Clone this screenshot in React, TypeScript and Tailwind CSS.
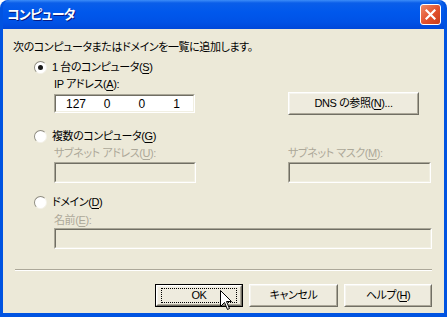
import React from 'react';

const font = "font-['Liberation_Sans','Noto_Sans_CJK_JP',sans-serif] [font-feature-settings:'palt']";

const Radio: React.FC<{ checked?: boolean; children: React.ReactNode }> = ({ checked, children }) => (
  <div className="flex h-[13px] items-center gap-[5px] pl-[31px]">
    <span className="flex h-[13px] w-[13px] items-center justify-center rounded-full border border-[#8e8c80] border-b-[#f4f2ea] border-r-[#f4f2ea] bg-white">
      {checked && <span className="h-[5px] w-[5px] rounded-full bg-[#1a1a1a]" />}
    </span>
    <span className="leading-[13px]">{children}</span>
  </div>
);

const SunkenBox: React.FC<{ className?: string; children?: React.ReactNode; enabled?: boolean }> = ({ className, children, enabled }) => (
  <div className={`border border-[#a9a697] border-b-white border-r-white ${className ?? ''}`}>
    <div className={`h-full border border-[#706e63] border-b-[#f1efe2] border-r-[#f1efe2] ${enabled ? 'bg-white' : 'bg-[#ece9d8]'}`}>
      {children}
    </div>
  </div>
);

const Button: React.FC<{ children: React.ReactNode; isDefault?: boolean; className?: string }> = ({ children, isDefault, className }) => {
  const bevel = (
    <div className="h-full border border-white border-b-[#716f64] border-r-[#716f64]">
      <div className="flex h-full items-center justify-center border border-[#f5f4ee] border-b-[#aca899] border-r-[#aca899] bg-[#eeebde]">
        {isDefault ? (
          <div className="flex h-[15px] w-[calc(100%-6px)] items-center justify-center border border-dotted border-black">{children}</div>
        ) : (
          children
        )}
      </div>
    </div>
  );
  return isDefault ? (
    <div className={`h-[23px] border border-black ${className ?? ''}`}>{bevel}</div>
  ) : (
    <div className={`h-[23px] ${className ?? ''}`}>{bevel}</div>
  );
};

const U: React.FC<{ children: React.ReactNode }> = ({ children }) => (
  <span className="underline underline-offset-[2px]">{children}</span>
);

export default function App() {
  return (
    <div className={`h-[317px] w-[447px] bg-white text-[11px] tracking-[-0.4px] text-black ${font}`}>
      <div className="flex h-full flex-col rounded-t-[8px] bg-[#0053e1] px-[3px] pb-[4px]">
        {/* title bar */}
        <div className="flex h-[29px] shrink-0 items-center justify-between rounded-t-[7px] bg-[linear-gradient(#3c8cf8_0px,#0a5ee9_3px,#0058ec_12px,#0052e6_22px,#0048d9_29px)] pl-[4px] pr-[3px]">
          <span className="text-[13px] font-bold leading-[13px] tracking-[-0.8px] text-white [text-shadow:1px_1px_0_#0a1a80]">コンピュータ</span>
          <div className="flex h-[21px] w-[21px] items-center justify-center rounded-[3px] border border-white bg-[linear-gradient(135deg,#f08a68,#e2502c_55%,#c83d1c)]">
            <svg width="11" height="11" viewBox="0 0 11 11">
              <path d="M1.5 1.5 L9.5 9.5 M9.5 1.5 L1.5 9.5" stroke="white" strokeWidth="2.2" strokeLinecap="square" />
            </svg>
          </div>
        </div>

        {/* client area */}
        <div className="flex flex-1 flex-col bg-[#ece9d8]">
          <div className="mt-[12px] h-[12px] pl-[10px] leading-[12px]">次のコンピュータまたはドメインを一覧に追加します。</div>

          <div className="mt-[8px]">
            <Radio checked>1 台のコンピュータ(<U>S</U>)</Radio>
          </div>

          <div className="mt-[4px] h-[12px] pl-[51px] leading-[12px]">IP アドレス(<U>A</U>):</div>

          <div className="mt-[2px] flex h-[23px] items-center pl-[51px]">
            <SunkenBox enabled className="h-[19px] w-[141px]">
              <div className="flex h-full items-center text-[12px] leading-[12px] tracking-normal">
                <span className="w-[36px] pl-[10px]">127</span>
                <span className="w-[36px] pl-[12px]">0</span>
                <span className="w-[36px] pl-[11px]">0</span>
                <span className="w-[30px] pl-[10px]">1</span>
              </div>
            </SunkenBox>
            <Button className="ml-[93px] w-[131px]">
              DNS の参照(<U>N</U>)...
            </Button>
          </div>

          <div className="mt-[15px]">
            <Radio>複数のコンピュータ(<U>G</U>)</Radio>
          </div>

          <div className="mt-[4px] flex h-[12px] pl-[51px] leading-[12px] text-[#aca899]">
            <span className="w-[234px]">サブネット アドレス(<U>U</U>):</span>
            <span>サブネット マスク(<U>M</U>):</span>
          </div>

          <div className="mt-[3px] flex pl-[51px]">
            <SunkenBox className="h-[21px] w-[142px]" />
            <SunkenBox className="ml-[92px] h-[21px] w-[143px]" />
          </div>

          <div className="mt-[13px]">
            <Radio>ドメイン(<U>D</U>)</Radio>
          </div>

          <div className="mt-[5px] h-[12px] pl-[51px] leading-[12px] text-[#aca899]">
            名前(<U>E</U>):
          </div>

          <div className="mt-[2px] pl-[51px]">
            <SunkenBox className="h-[21px] w-[378px]" />
          </div>

          <div className="ml-[12px] mr-[12px] mt-[20px] h-[2px] border-b border-t border-b-white border-t-[#aca899]" />

          <div className="relative mt-[13px] flex justify-end gap-[6px] pr-[12px]">
            <Button isDefault className="w-[88px]">
              OK
            </Button>
            <Button className="w-[89px]">キャンセル</Button>
            <Button className="w-[88px]">
              ヘルプ(<U>H</U>)
            </Button>
            {/* mouse pointer */}
            <svg className="absolute left-[217px] top-[6px]" width="13" height="21" viewBox="0 0 13 21">
              <path
                d="M0.5 0.5 L0.5 16.5 L4.5 12.5 L7.5 19.5 L9.5 18.5 L6.5 11.5 L11.5 11.5 Z"
                fill="white"
                stroke="black"
                strokeWidth="1"
                strokeLinejoin="miter"
              />
            </svg>
          </div>
        </div>
      </div>
    </div>
  );
}
